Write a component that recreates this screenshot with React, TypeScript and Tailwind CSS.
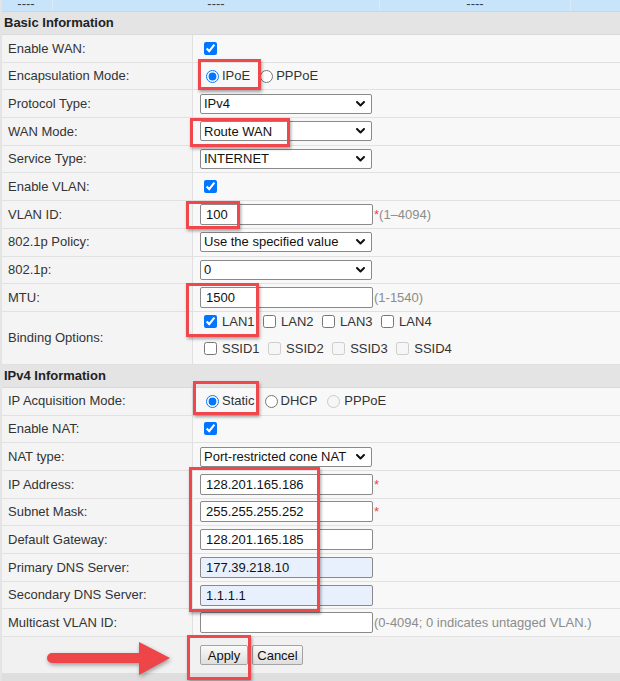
import React from "react";

const Row = ({
  label,
  children,
  h = "h-[27.7px]",
}: {
  label: string;
  children?: React.ReactNode;
  h?: string;
}) => (
  <div className={`flex ${h} border-b border-[#e1e1e1]`}>
    <div className="w-[191px] shrink-0 flex items-center pl-[6px] bg-[#f4f4f4] border-r border-[#e1e1e1] text-[#333]">
      {label}
    </div>
    <div className="flex-1 flex items-center pl-[7px] bg-[#f8f8f8]">{children}</div>
  </div>
);

const Section = ({ title }: { title: string }) => (
  <div className="h-[23px] flex items-center pl-[2px] bg-[#e4e4e4] border-b border-[#dadada] font-bold text-[#222]">
    {title}
  </div>
);

const Check = ({ checked = false, disabled = false, className = "" }: { checked?: boolean; disabled?: boolean; className?: string }) => (
  <input
    type="checkbox"
    defaultChecked={checked}
    disabled={disabled}
    className={`m-0 w-[13px] h-[13px] shrink-0 ${className}`}
  />
);

const TextInput = ({ value = "", blue = false }: { value?: string; blue?: boolean }) => (
  <input
    type="text"
    defaultValue={value}
    className={
      blue
        ? "w-[173px] h-[21px] border border-[#8a8a8a] rounded-[2px] bg-[#e8f0fe] px-[5px] text-[13px] text-[#111] outline-none"
        : "w-[173px] h-[21px] border border-[#8a8a8a] rounded-[2px] bg-white px-[5px] text-[13px] text-[#111] outline-none"
    }
  />
);

const Select = ({ value }: { value: string }) => (
  <div className="w-[172px] h-[20px] border border-[#8a8a8a] rounded-[2px] bg-white flex items-center justify-between pl-[3px] pr-[6px] text-[#111]">
    <span className="whitespace-nowrap">{value}</span>
    <svg width="9" height="6" viewBox="0 0 9 6" className="shrink-0">
      <polyline points="1,1 4.5,4.5 8,1" fill="none" stroke="#111" strokeWidth="2" strokeLinecap="round" strokeLinejoin="round" />
    </svg>
  </div>
);

const Hint = ({ star = false, text = "" }: { star?: boolean; text?: string }) => (
  <span className="ml-[1px] whitespace-nowrap text-[#8c8c8c]">
    {star && <span className="text-[#e5484d]">*</span>}
    {text}
  </span>
);

const RedBox = ({ cls }: { cls: string }) => (
  <div
    className={`absolute pointer-events-none border-[3px] border-[#ef474b] shadow-[1px_2px_3px_rgba(0,0,0,0.35)] ${cls}`}
  />
);

export default function App() {
  return (
    <div className="relative w-[620px] h-[681px] overflow-hidden bg-[#f8f8f8] text-[13px] text-[#333] font-['Liberation_Sans',Arial,sans-serif] border-l-2 border-[#e4e4e4]">
      {/* table header (scrolled) */}
      <div className="flex h-[12px] bg-[#c7e4fb] border-b border-[#cdd6dd] overflow-hidden -ml-[2px]">
        <div className="w-[53px] shrink-0 border-r border-[#dbe9f5] flex justify-center items-start">
          <span className="-mt-[4px] leading-[15px] text-[#3a3f48]">----</span>
        </div>
        <div className="w-[327px] shrink-0 border-r border-[#dbe9f5] flex justify-center items-start">
          <span className="-mt-[4px] leading-[15px] text-[#3a3f48]">----</span>
        </div>
        <div className="w-[191px] shrink-0 border-r border-[#dbe9f5] flex justify-center items-start">
          <span className="-mt-[4px] leading-[15px] text-[#3a3f48]">----</span>
        </div>
        <div className="flex-1" />
      </div>

      <Section title="Basic Information" />
      <Row label="Enable WAN:">
        <Check checked className="ml-[4px]" />
      </Row>
      <Row label="Encapsulation Mode:">
        <div className="flex items-center gap-[10px] ml-[6px]">
          <label className="flex items-center">
            <input type="radio" name="encap" defaultChecked className="m-0 w-[13px] h-[13px]" />
            <span className="ml-[3px]">IPoE</span>
          </label>
          <label className="flex items-center">
            <input type="radio" name="encap" className="m-0 w-[13px] h-[13px]" />
            <span className="ml-[3px]">PPPoE</span>
          </label>
        </div>
      </Row>
      <Row label="Protocol Type:">
        <Select value="IPv4" />
      </Row>
      <Row label="WAN Mode:">
        <Select value="Route WAN" />
      </Row>
      <Row label="Service Type:">
        <Select value="INTERNET" />
      </Row>
      <Row label="Enable VLAN:">
        <Check checked className="ml-[4px]" />
      </Row>
      <Row label="VLAN ID:">
        <TextInput value="100" />
        <Hint star text="(1–4094)" />
      </Row>
      <Row label="802.1p Policy:">
        <Select value="Use the specified value" />
      </Row>
      <Row label="802.1p:">
        <Select value="0" />
      </Row>
      <Row label="MTU:">
        <TextInput value="1500" />
        <Hint text="(1-1540)" />
      </Row>
      <div className="flex h-[53px] border-b border-[#e1e1e1]">
        <div className="w-[191px] shrink-0 flex items-center pl-[6px] bg-[#f4f4f4] border-r border-[#e1e1e1] text-[#333]">
          Binding Options:
        </div>
        <div className="flex-1 flex flex-col gap-[9px] pt-[1px] pl-[7px] bg-[#f8f8f8]">
          <div className="h-[18px] flex items-center gap-[8.5px] ml-[4px]">
            {["LAN1", "LAN2", "LAN3", "LAN4"].map((l, i) => (
              <label key={l} className="flex items-center">
                <Check checked={i === 0} />
                <span className="ml-[5px]">{l}</span>
              </label>
            ))}
          </div>
          <div className="h-[18px] flex items-center gap-[8.5px] ml-[4px]">
            {["SSID1", "SSID2", "SSID3", "SSID4"].map((l, i) => (
              <label key={l} className="flex items-center">
                <Check disabled={i !== 0} />
                <span className="ml-[5px]">{l}</span>
              </label>
            ))}
          </div>
        </div>
      </div>

      <Section title="IPv4 Information" />
      <Row label="IP Acquisition Mode:">
        <div className="flex items-center gap-[10px] ml-[6px]">
          <label className="flex items-center">
            <input type="radio" name="ipmode" defaultChecked className="m-0 w-[13px] h-[13px]" />
            <span className="ml-[3px]">Static</span>
          </label>
          <label className="flex items-center">
            <input type="radio" name="ipmode" className="m-0 w-[13px] h-[13px]" />
            <span className="ml-[3px]">DHCP</span>
          </label>
          <label className="flex items-center">
            <input type="radio" name="ipmode" disabled className="m-0 w-[13px] h-[13px]" />
            <span className="ml-[4px]">PPPoE</span>
          </label>
        </div>
      </Row>
      <Row label="Enable NAT:">
        <Check checked className="ml-[4px]" />
      </Row>
      <Row label="NAT type:">
        <Select value="Port-restricted cone NAT" />
      </Row>
      <Row label="IP Address:">
        <TextInput value="128.201.165.186" />
        <Hint star />
      </Row>
      <Row label="Subnet Mask:">
        <TextInput value="255.255.255.252" />
        <Hint star />
      </Row>
      <Row label="Default Gateway:">
        <TextInput value="128.201.165.185" />
      </Row>
      <Row label="Primary DNS Server:">
        <TextInput value="177.39.218.10" blue />
      </Row>
      <Row label="Secondary DNS Server:">
        <TextInput value="1.1.1.1" blue />
      </Row>
      <Row label="Multicast VLAN ID:">
        <TextInput value="" />
        <Hint text="(0-4094; 0 indicates untagged VLAN.)" />
      </Row>

      {/* buttons */}
      <div className="flex h-[36px] items-center bg-[#f1f1f1]">
        <div className="w-[191px] shrink-0" />
        <div className="flex items-center gap-[4px] pl-[7px]">
          <button className="w-[48px] h-[20px] border border-[#a3a3a3] rounded-[2px] bg-gradient-to-b from-[#fafafa] to-[#dedede] text-[13px] text-[#111]">
            Apply
          </button>
          <button className="w-[51px] h-[20px] border border-[#a3a3a3] rounded-[2px] bg-gradient-to-b from-[#fafafa] to-[#dedede] text-[13px] text-[#111]">
            Cancel
          </button>
        </div>
      </div>
      <div className="h-[10px] bg-[#dedede]" />

      {/* annotations */}
      <RedBox cls="left-[196px] top-[59px] w-[63px] h-[31px]" />
      <RedBox cls="left-[188px] top-[118px] w-[100px] h-[29px]" />
      <RedBox cls="left-[184px] top-[201px] w-[54px] h-[28px]" />
      <RedBox cls="left-[184px] top-[283px] w-[73px] h-[54px]" />
      <RedBox cls="left-[191px] top-[381px] w-[66px] h-[34px]" />
      <RedBox cls="left-[187px] top-[467px] w-[131px] h-[145px]" />
      <RedBox cls="left-[185px] top-[635px] w-[64px] h-[45px]" />

      <svg
        className="absolute left-[38px] top-[636px] pointer-events-none"
        width="140"
        height="45"
        viewBox="38 636 140 45"
        style={{ filter: "drop-shadow(1px 2px 2px rgba(0,0,0,0.35))" }}
      >
        <path d="M50 653 L137 653 L137 642 L168 658 L137 675 L137 663 L50 663 A5 5 0 0 1 50 653 Z" fill="#ee4548" />
      </svg>
    </div>
  );
}
